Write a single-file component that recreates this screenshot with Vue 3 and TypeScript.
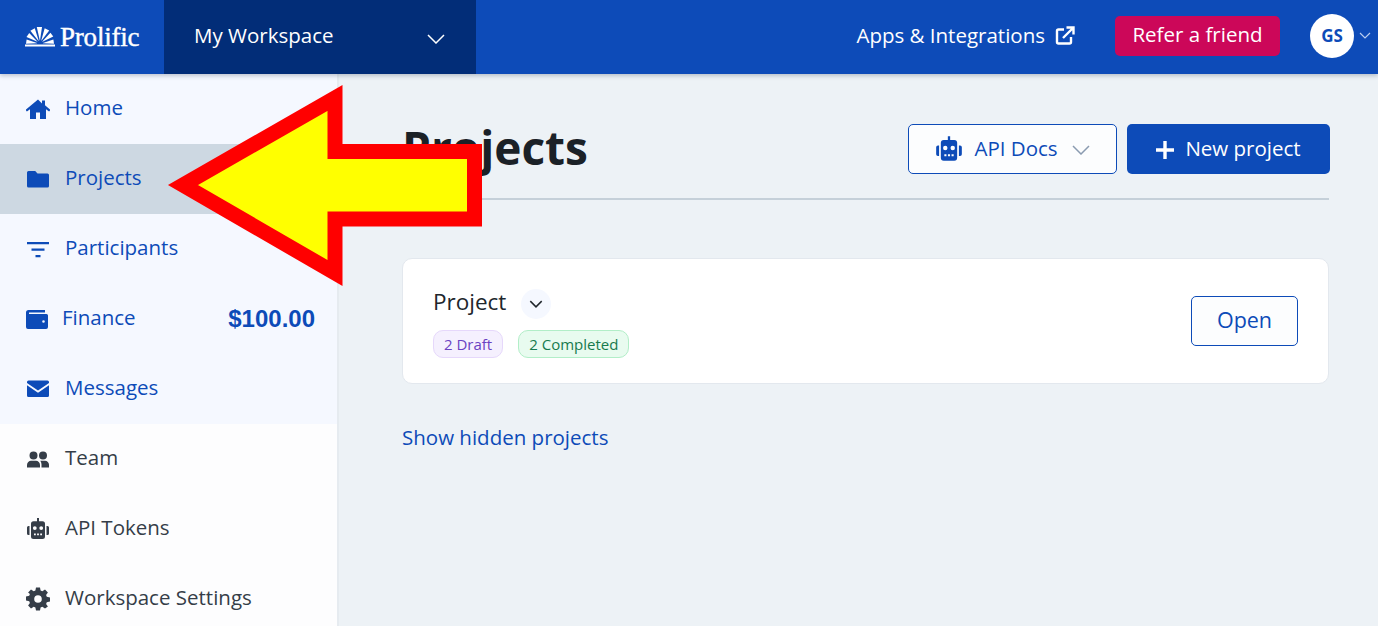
<script setup lang="ts">
interface NavItem { label: string; icon: string; value?: string; active?: boolean }
const primaryNav: NavItem[] = [
  { label: 'Home', icon: 'home' },
  { label: 'Projects', icon: 'folder', active: true },
  { label: 'Participants', icon: 'filter' },
  { label: 'Finance', icon: 'wallet', value: '$100.00' },
  { label: 'Messages', icon: 'mail' },
]
const secondaryNav: NavItem[] = [
  { label: 'Team', icon: 'team' },
  { label: 'API Tokens', icon: 'robot' },
  { label: 'Workspace Settings', icon: 'gear' },
]
const icons: Record<string, string> = {
  home: 'M12 2.500-.5 12.800l1.400 1.700L4 12.300V22h6v-6.500h4V22h6v-9.700l3.100 2.200 1.400-1.700-5.500-4.500V3.500h-3v2.900L12 2.500Z',
  folder: 'M2.500 4h6.700l2.300 2.500h10a1.500 1.500 0 0 1 1.500 1.500v11a1.500 1.500 0 0 1-1.500 1.500h-19A1.500 1.500 0 0 1 1 19V5.500A1.500 1.500 0 0 1 2.500 4Z',
  filter: 'M1 5h22v2.200H1V5Zm4.500 6.500h13v2.200h-13v-2.200Zm4 6.500h5v2.200h-5V18Z',
  wallet: 'M3.500 3H20v2.500H4v1.500h17.500A1.500 1.500 0 0 1 23 8.500V20a2 2 0 0 1-2 2H3a2 2 0 0 1-2-2V5.500A2.500 2.500 0 0 1 3.500 3Zm15 10.200a1.300 1.300 0 1 0 0 2.600 1.300 1.300 0 0 0 0-2.600Z',
  mail: 'M2.500 3.500h19A1.500 1.500 0 0 1 23 5v.9l-11 7.500L1 5.900V5a1.500 1.500 0 0 1 1.500-1.500ZM1 8.200l11 7.500 11-7.500v10.300a1.500 1.500 0 0 1-1.500 1.500h-19A1.500 1.500 0 0 1 1 18.500V8.200Z',
  team: 'M7.500 4.500a4 4 0 1 1 0 8 4 4 0 0 1 0-8Zm9.500 0a4 4 0 1 1 0 8 4 4 0 0 1 0-8ZM1 18c0-2.500 2-4.200 4-4.200h5c2 0 4 1.700 4 4.200v2.500H1V18Zm14.500 2.500v-3c0-1.300-.4-2.500-1.200-3.700H19c2.200 0 4 1.700 4 4v2.700h-7.500Z',
  robot: 'M11 1h2v3.200h3.500A2.500 2.500 0 0 1 19 6.700v12.800a2.500 2.500 0 0 1-2.500 2.500h-9A2.500 2.500 0 0 1 5 19.500V6.700a2.500 2.500 0 0 1 2.500-2.500H11V1ZM8.800 9.200a1.900 1.900 0 1 0 0 3.800 1.900 1.900 0 0 0 0-3.800Zm6.400 0a1.900 1.900 0 1 0 0 3.800 1.900 1.900 0 0 0 0-3.800ZM8 16.500v1.800h1.800v-1.800H8Zm3.100 0v1.800h1.800v-1.800h-1.800Zm3.100 0v1.800H16v-1.800h-1.800ZM1 10.500A1.500 1.500 0 0 1 2.500 9H3.500v9H2.500A1.500 1.500 0 0 1 1 16.500v-6ZM20.500 9h1a1.500 1.500 0 0 1 1.500 1.500v6a1.500 1.500 0 0 1-1.500 1.500h-1V9Z',
  gear: 'M10 .5h4l.6 3.100 1.700.7L19 2.500l2.900 2.900-1.800 2.700.7 1.700 3.200.7v4l-3.200.7-.7 1.700 1.800 2.700L19 21.500l-2.700-1.800-1.700.7-.6 3.100h-4l-.6-3.100-1.700-.7L5 21.500l-2.900-2.900 1.800-2.700-.7-1.700-3.200-.7v-4l3.200-.7.7-1.700L2.100 5.400 5 2.500l2.700 1.800 1.700-.7L10 .5Zm2 7.700a3.800 3.800 0 1 0 0 7.600 3.800 3.800 0 0 0 0-7.600Z',
}
// Fan of wedge-shaped rays for the logo mark, radiating from the base centre.
const rays = [
  { a: 8, r: 14 }, { a: 37, r: 15 }, { a: 64, r: 16 }, { a: 92, r: 17 },
  { a: 118, r: 16 }, { a: 145, r: 15 }, { a: 172, r: 14 },
].map(({ a, r }) => {
  const pt = (deg: number, rad: number) => {
    const t = (deg * Math.PI) / 180
    return `${(15 + rad * Math.cos(t)).toFixed(2)},${(16.500 - rad * Math.sin(t)).toFixed(2)}`
  }
  return `${pt(a - 2, 3)} ${pt(a - 9, r)} ${pt(a + 9, r)} ${pt(a + 2, 3)}`
})
</script>

<template>
  <div class="app">
    <header class="topbar">
      <a class="brand">
        <svg class="brand-mark" viewBox="0 0 30 20" aria-hidden="true">
          <polygon v-for="(p, i) in rays" :key="i" :points="p" fill="#fff"/>
          <rect x="0" y="17.500" width="30" height="2" fill="#fff"/>
        </svg>
        <span class="brand-name">Prolific</span>
      </a>
      <button class="workspace">
        <span>My Workspace</span>
        <svg class="ws-chev" viewBox="0 0 18 10"><path d="M1 1l8 8 8-8" fill="none" stroke="#fff" stroke-width="1.500"/></svg>
      </button>
      <div class="top-actions">
        <a class="apps">
          <span>Apps &amp; Integrations</span>
          <svg class="ext" viewBox="0 0 20 20"><path d="M9 3.500H3.500a1.500 1.500 0 0 0-1.500 1.500v11a1.500 1.500 0 0 0 1.500 1.500h11a1.500 1.500 0 0 0 1.500-1.500V11M8 12l9.500-9.500M11.500 1.500h7v7" fill="none" stroke="#fff" stroke-width="2.400"/></svg>
        </a>
        <button class="refer">Refer a friend</button>
        <div class="account">
          <span class="avatar">GS</span>
          <svg class="acc-chev" viewBox="0 0 12 7"><path d="M1 1l5 5 5-5" fill="none" stroke="#b9cdf0" stroke-width="1.200"/></svg>
        </div>
      </div>
    </header>

    <div class="body">
      <aside class="sidebar">
        <nav class="nav-primary">
          <a v-for="item in primaryNav" :key="item.label" class="nav-item" :class="{ active: item.active, finance: item.value }">
            <svg class="nav-icon" viewBox="0 0 24 24"><path :d="icons[item.icon]" fill="currentColor" fill-rule="evenodd"/></svg>
            <span class="nav-label">{{ item.label }}</span>
            <span v-if="item.value" class="nav-value">{{ item.value }}</span>
          </a>
        </nav>
        <nav class="nav-secondary">
          <a v-for="item in secondaryNav" :key="item.label" class="nav-item">
            <svg class="nav-icon" viewBox="0 0 24 24"><path :d="icons[item.icon]" fill="currentColor" fill-rule="evenodd"/></svg>
            <span class="nav-label">{{ item.label }}</span>
          </a>
        </nav>
      </aside>

      <main class="main">
        <div class="page-head">
          <h1>Projects</h1>
          <div class="head-actions">
            <button class="btn-outline docs">
              <svg class="robot" viewBox="0 0 24 24"><path :d="icons.robot" fill="currentColor" fill-rule="evenodd"/></svg>
              <span>API Docs</span>
              <svg class="docs-chev" viewBox="0 0 18 10"><path d="M1 1l8 8 8-8" fill="none" stroke="#8a9bb0" stroke-width="1.500"/></svg>
            </button>
            <button class="btn-primary">
              <svg class="plus" viewBox="0 0 18 18"><path d="M9 0v18M0 9h18" stroke="#fff" stroke-width="3.400"/></svg>
              <span>New project</span>
            </button>
          </div>
        </div>

        <section class="card">
          <div class="card-info">
            <div class="card-title">
              <span>Project</span>
              <span class="round-toggle">
                <svg viewBox="0 0 12 7"><path d="M1 1l5 5 5-5" fill="none" stroke="#20262c" stroke-width="1.300"/></svg>
              </span>
            </div>
            <div class="tags">
              <span class="tag draft">2 Draft</span>
              <span class="tag done">2 Completed</span>
            </div>
          </div>
          <button class="btn-outline open">Open</button>
        </section>

        <a class="show-hidden">Show hidden projects</a>
      </main>
    </div>

    <svg class="annotation" viewBox="0 0 1378 626" aria-hidden="true">
      <polygon points="183,185 335,98 335,151.500 474.500,151.500 474.500,219 335,219 335,273" fill="#ffff00" stroke="#ff0000" stroke-width="15" stroke-linejoin="miter" stroke-miterlimit="10"/>
    </svg>
  </div>
</template>

<style>
html, body { margin: 0; height: 100%; overflow: hidden; }
</style>

<style scoped>
.app {
  position: relative;
  width: 1378px;
  height: 626px;
  overflow: hidden;
  display: flex;
  flex-direction: column;
  font-family: "Open Sans", "Noto Sans", sans-serif;
  color: #20262c;
}
button { font-family: inherit; cursor: pointer; }
.topbar {
  position: relative;
  z-index: 2;
  flex: 0 0 74px;
  display: flex;
  align-items: stretch;
  background: #0d4bb8;
  box-shadow: 0 2px 4px rgba(30, 50, 80, .25);
  color: #fff;
}
.brand {
  width: 164px;
  flex: none;
  display: flex;
  align-items: center;
  box-sizing: border-box;
  padding-left: 25px;
  gap: 5px;
}
.brand-mark { width: 30px; height: 20px; }
.brand-name {
  font-family: "Liberation Serif", serif;
  font-size: 27px;
  letter-spacing: -.2px;
  line-height: 1;
  -webkit-text-stroke: .4px #fff;
}
.workspace {
  width: 312px;
  border: 0;
  background: #022d78;
  color: #fff;
  font-size: 20.500px;
  display: flex;
  align-items: center;
  justify-content: space-between;
  padding: 0 31px 4px 30px;
}
.ws-chev { width: 18px; height: 10px; margin-top: 8px; }
.top-actions {
  margin-left: auto;
  display: flex;
  align-items: center;
}
.apps {
  display: flex;
  align-items: center;
  gap: 10px;
  font-size: 20.500px;
  margin-right: 40px;
  padding-bottom: 5px;
}
.ext { width: 20px; height: 20px; margin-top: 3px; }
.refer {
  width: 165px;
  height: 40px;
  border: 0;
  border-radius: 5px;
  background: #cc0759;
  color: #fff;
  font-size: 20.500px;
  padding: 0 0 3px;
  margin-bottom: 3px;
}
.account {
  display: flex;
  align-items: center;
  margin-left: 30px;
  margin-right: 7px;
  gap: 5px;
  margin-bottom: 3px;
}
.avatar {
  width: 44px;
  height: 44px;
  border-radius: 50%;
  background: #fff;
  color: #0d4bb8;
  font-size: 17px;
  font-weight: 700;
  display: flex;
  align-items: center;
  justify-content: center;
  padding-bottom: 0;
}
.acc-chev { width: 12px; height: 7px; }
.body { flex: 1; display: flex; min-height: 0; }
.sidebar {
  width: 339px;
  flex: none;
  box-sizing: border-box;
  background: #fdfdfe;
  border-right: 2px solid #e6ebf0;
}
.nav-primary { background: #f5f8ff; color: #0d4bb8; }
.nav-secondary { color: #353d48; }
.nav-item {
  height: 70px;
  display: flex;
  align-items: center;
  padding: 0 22px 0 26px;
  font-size: 20.500px;
}
.nav-item.active { background: #cdd8e2; }
.nav-icon { width: 24px; height: 24px; flex: none; margin-right: 15px; }
.nav-item.finance .nav-icon { margin-left: -1px; margin-right: 13px; }
.nav-label { padding-bottom: 5px; }
.nav-value {
  margin-left: auto;
  font-family: "Liberation Sans", Arial, sans-serif;
  font-weight: 700;
  font-size: 24px;
}
.main {
  flex: 1;
  min-width: 0;
  background: #edf2f6;
  padding: 50px 49px 0 63px;
}
.page-head {
  height: 74px;
  display: flex;
  align-items: flex-start;
  justify-content: space-between;
  border-bottom: 2px solid #c5d0d9;
}
h1 {
  margin: 0;
  font-size: 46px;
  font-weight: 700;
  line-height: 46px;
  color: #1b2127;
}
.head-actions { display: flex; gap: 10px; margin-right: -1px; }
.btn-outline {
  background: #fcfdfe;
  border: 1.500px solid #0d4bb8;
  border-radius: 5px;
  color: #0d4bb8;
  font-size: 20.500px;
  padding: 0;
}
.docs {
  width: 209px;
  height: 50px;
  display: flex;
  align-items: center;
  justify-content: center;
  gap: 11px;
  padding-bottom: 2px;
}
.robot { width: 28px; height: 28px; margin-top: 2px; }
.docs-chev { width: 18px; height: 10px; margin: 3px 0 0 3px; }
.btn-primary {
  width: 203px;
  height: 50px;
  background: #0d4bb8;
  color: #fff;
  border: 0;
  border-radius: 5px;
  font-size: 20.500px;
  display: flex;
  align-items: center;
  justify-content: center;
  gap: 11px;
  padding-bottom: 3px;
}
.plus { width: 18px; height: 18px; margin-top: 3px; }
.card {
  margin-top: 58px;
  height: 126px;
  box-sizing: border-box;
  background: #fff;
  border: 1px solid #e3e8ee;
  border-radius: 10px;
  display: flex;
  align-items: center;
  justify-content: space-between;
  padding: 0 30px;
}
.card-title {
  display: flex;
  align-items: center;
  gap: 15px;
  font-size: 22.500px;
  color: #20262c;
}
.round-toggle {
  width: 30px;
  height: 30px;
  border-radius: 50%;
  background: #f5f8ff;
  display: flex;
  align-items: center;
  justify-content: center;
  margin-top: 4px;
}
.round-toggle svg { width: 14px; height: 8px; }
.tags { display: flex; gap: 15px; margin-top: 11px; }
.tag {
  height: 28px;
  box-sizing: border-box;
  display: flex;
  align-items: center;
  border-radius: 10px;
  padding: 0 10px;
  font-size: 15px;
}
.draft { background: #f5f0fe; border: 1px solid #e6d8fb; color: #6a42c2; }
.done { background: #e8fbef; border: 1px solid #b2eec8; color: #177a4e; }
.open { width: 107px; height: 50px; font-size: 21.500px; padding-bottom: 4px; }
.show-hidden {
  display: block;
  margin-top: 39px;
  font-size: 20.500px;
  font-weight: 500;
  color: #0d4bb8;
}
.annotation {
  position: absolute;
  inset: 0;
  width: 1378px;
  height: 626px;
  z-index: 5;
  pointer-events: none;
}
</style>
